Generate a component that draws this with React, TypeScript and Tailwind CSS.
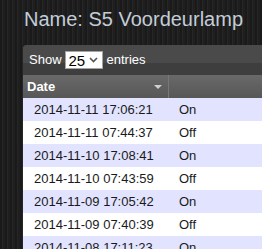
import React from 'react';

const rows = [
    { date: '2014-11-11 17:06:21', state: 'On' },
    { date: '2014-11-11 07:44:37', state: 'Off' },
    { date: '2014-11-10 17:08:41', state: 'On' },
    { date: '2014-11-10 07:43:59', state: 'Off' },
    { date: '2014-11-09 17:05:42', state: 'On' },
    { date: '2014-11-09 07:40:39', state: 'Off' },
    { date: '2014-11-08 17:11:23', state: 'On' },
];

export default function App() {
    return (
        <div
            className="w-[262px] h-[249px] overflow-hidden bg-[#1d1d1d] bg-[repeating-linear-gradient(90deg,#1a1a1a_0px,#1a1a1a_2px,#262626_2px,#262626_3px,#1f1f1f_3px,#1f1f1f_5px)] pl-[23px] pt-[8px]"
            style={{ fontFamily: '"Liberation Sans", Arial, sans-serif' }}
        >
            <h1 className="pl-[1px] text-[20px] leading-[23px] text-[#c3cdd8]">
                Name: S5 Voordeurlamp
            </h1>

            <div className="mt-[14px] w-[260px] rounded-tl-[4px] overflow-hidden bg-[#474747]">
                {/* toolbar */}
                <div className="h-[30px] flex items-center pl-[6px] text-[13px] text-white bg-[linear-gradient(#4a4a4a_0%,#4a4a4a_60%,#3e3e3e_60%,#3e3e3e_100%)]">
                    <span>Show</span>
                    <div className="ml-[3px] w-[38px] h-[18px] bg-white border border-[#a4a4a4] flex items-center justify-between pl-[3px] pr-[4px] text-[15px] leading-none text-black">
                        <span>25</span>
                        <svg width="9" height="6" viewBox="0 0 9 6">
                            <path d="M1 1 L4.5 4.5 L8 1" fill="none" stroke="#555" strokeWidth="1.6" />
                        </svg>
                    </div>
                    <span className="ml-[4px]">entries</span>
                </div>

                {/* column headers */}
                <div className="flex h-[23px] bg-[linear-gradient(#696969,#575757)] text-[13px] font-bold text-white">
                    <div className="w-[145px] flex items-center justify-between pl-[4px] pr-[6px]">
                        <span>Date</span>
                        <svg width="8" height="4" viewBox="0 0 8 4">
                            <path d="M0 0 H8 L4 4 Z" fill="#d0d0d0" />
                        </svg>
                    </div>
                    <div className="w-px bg-[#787878]" />
                    <div className="flex-1" />
                </div>

                {/* rows */}
                <div className="text-[13px] text-[#1a1a1a]">
                    {rows.map((r, i) => (
                        <div
                            key={r.date}
                            className={`flex h-[23px] items-center ${i % 2 === 0 ? 'bg-[#e2e4ff]' : 'bg-white'}`}
                        >
                            <div className="w-[146px] pl-[11px]">{r.date}</div>
                            <div className="pl-[10px]">{r.state}</div>
                        </div>
                    ))}
                </div>
            </div>
        </div>
    );
}
